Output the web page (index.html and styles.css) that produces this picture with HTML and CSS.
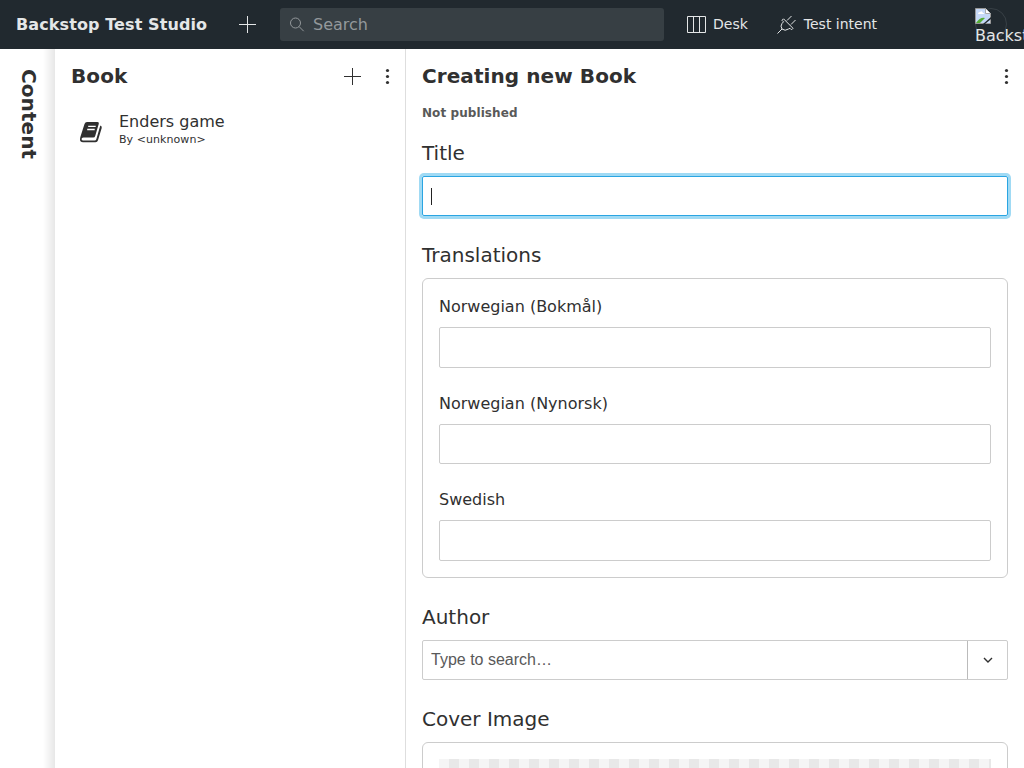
FILE: index.html
```html
<!DOCTYPE html>
<html lang="en">
<head>
<meta charset="utf-8">
<title>Backstop Test Studio</title>
<link rel="stylesheet" href="styles.css">
</head>
<body>
<header class="navbar">
  <div class="brand">Backstop Test Studio</div>
  <svg class="create" width="25" height="25" viewBox="0 0 25 25"><path d="M12.5 4v17M4 12.5h17" stroke="currentColor"/></svg>
  <div class="search">
    <svg width="25" height="25" viewBox="0 0 25 25" fill="none" stroke="currentColor"><circle cx="9.500" cy="11" r="5"/><path d="M13 14.500l4.700 4.700"/></svg>
    <span>Search</span>
  </div>
  <nav class="tools">
    <a class="tool desk"><svg width="25" height="25" viewBox="0 0 25 25" fill="none" stroke="currentColor"><path d="M3.5 4.500h18v16h-18zM9.500 4.500v16M15.500 4.500v16"/></svg><span>Desk</span></a>
    <a class="tool intent"><svg width="25" height="25" viewBox="0 0 25 25" fill="none" stroke="currentColor"><path d="M3.500 21.500L8 17M8 17q-2-3 0-5.500l1.500-1.700-1.500-1.500 1.500-1.500 9.500 9.500-1.500 1.500-1.500-1.500L14.500 17Q11 19.500 8 17zM13 8.500l4.500-4.500M17 12.500l4.500-4.500"/></svg><span>Test intent</span></a>
  </nav>
  <div class="avatar">
    <div class="avatar-ring"></div>
    <svg width="16" height="16" viewBox="0 0 16 16"><path d="M.5.500h10l5 5v10H.5z" fill="#c5d8f7" stroke="#999"/><path d="M10.500.500v5h5" fill="#fff" stroke="#aaa"/><path d="M3 6q0-2 2-2 2-2 3 1 2 0 1 1z" fill="#fff"/><path d="M1 15q4-6 9-5l-5 5z" fill="#54ad35"/><path d="M8 16l8-7v2l-6 5z" fill="#21292f"/></svg>
    <span>Backstop</span>
  </div>
</header>
<main class="desk-tool">
  <aside class="collapsed"><h2>Content</h2></aside>
  <section class="list-pane">
    <div class="pane-head">
      <h2>Book</h2>
      <svg class="plus" width="25" height="25" viewBox="0 0 25 25"><path d="M12.500 4v17M4 12.500h17" stroke="currentColor"/></svg>
      <svg class="dots" width="5" height="17" viewBox="0 0 5 17" fill="currentColor"><circle cx="2.500" cy="2.500" r="1.600"/><circle cx="2.500" cy="8.500" r="1.600"/><circle cx="2.500" cy="14.500" r="1.600"/></svg>
    </div>
    <div class="item">
      <svg width="24" height="24" viewBox="0 0 24 24"><path d="M8 2h10.500q1.800 0 1.300 1.700L16.200 16q-.4 1.500-2 1.500H4.500q-2.300 0-1.900 2 .3 1 1.600 1h11.500q1.200 0 1.600-1.300L21.300 5.500q2 .7 1.400 2.500L19 20.300Q18.400 22.300 16.500 22.300H4Q1 22.300 1 19.500 1 18 1.500 16.500L5.500 4Q6.200 2 8 2z" fill="currentColor"/><path d="M9.200 6.300h7.500M8.200 9.500h7.500" stroke="#fff" stroke-width="1.300"/></svg>
      <div class="item-text"><div class="item-title">Enders game</div><div class="item-sub">By &lt;unknown&gt;</div></div>
    </div>
  </section>
  <section class="editor">
    <div class="pane-head">
      <h2>Creating new Book</h2>
      <svg class="dots" width="5" height="17" viewBox="0 0 5 17" fill="currentColor"><circle cx="2.500" cy="2.500" r="1.600"/><circle cx="2.500" cy="8.500" r="1.600"/><circle cx="2.500" cy="14.500" r="1.600"/></svg>
    </div>
    <div class="status">Not published</div>
    <div class="field">
      <div class="label">Title</div>
      <div class="input focused"><i class="caret"></i></div>
    </div>
    <div class="field">
      <div class="label">Translations</div>
      <div class="fieldset">
        <div class="subfield first"><div class="sublabel">Norwegian (Bokmål)</div><div class="input"></div></div>
        <div class="subfield"><div class="sublabel">Norwegian (Nynorsk)</div><div class="input"></div></div>
        <div class="subfield last"><div class="sublabel">Swedish</div><div class="input"></div></div>
      </div>
    </div>
    <div class="field">
      <div class="label">Author</div>
      <div class="input select"><span>Type to search…</span><div class="toggle"><svg width="10" height="7" viewBox="0 0 10 7" fill="none" stroke="currentColor" stroke-width="1.400"><path d="M1 1l4 4 4-4"/></svg></div></div>
    </div>
    <div class="field">
      <div class="label">Cover Image</div>
      <div class="fieldset cover"><div class="checker"></div></div>
    </div>
  </section>
</main>
</body>
</html>
```
FILE: styles.css
```css
* { box-sizing: border-box; }
body { margin: 0; height: 768px; overflow: hidden; background: #fff; color: #303030; font: 16px/20px "DejaVu Sans", sans-serif; }
h2 { margin: 0; font-size: 20px; line-height: 24px; font-weight: bold; letter-spacing: 0.08px; }
svg { display: block; flex: none; }

.navbar { display: flex; align-items: center; height: 49px; background: #21292f; color: #e4e6e7; overflow: hidden; }
.brand { width: 219px; padding-left: 16px; font-weight: bold; letter-spacing: 0.1px; white-space: nowrap; }
.create { margin-left: 16px; }
.search { display: flex; align-items: center; width: 384px; height: 33px; margin-left: 20px; padding-left: 6px; border-radius: 3px; background: #373f44; color: #93989b; }
.search span { margin-left: 2px; }
.tools { display: flex; font-size: 14px; margin-left: 20px; }
.tool { display: flex; align-items: center; }
.tool span { margin: 0 0 2px 4px; }
.intent { margin-left: 26px; }
.intent span { margin-left: 5px; }
.avatar { position: relative; width: 49px; height: 33px; margin-left: auto; }
.avatar-ring { position: absolute; top: 0; left: 0; width: 32px; height: 32px; border: 1px solid #384046; border-radius: 50%; }
.avatar svg { position: relative; }
.avatar span { position: relative; display: block; line-height: 20px; margin-top: 2px; }

.desk-tool { display: flex; height: 719px; }
.collapsed { width: 55px; flex: none; padding: 20px 0 0 17px; background: linear-gradient(to right, #fff 43px, #e7e7e7 55px); }
.collapsed h2 { writing-mode: vertical-rl; width: 24px; line-height: 24px; }
.list-pane { width: 351px; flex: none; border-right: 1px solid #dedede; }
.pane-head { display: flex; align-items: center; height: 54px; padding-left: 16px; }
.pane-head h2 { flex: 1; }
.plus { margin-right: 20px; }
.list-pane .dots { margin-right: 15px; }
.item { display: flex; margin-top: 8px; padding-left: 24px; }
.item > svg { margin-top: 9px; }
.item-text { margin: 1px 0 0 16px; }
.item-title { line-height: 20px; }
.item-sub { font-size: 11px; line-height: 16px; letter-spacing: 0.06px; }

.editor { flex: 1; height: 719px; padding: 0 16px; overflow: hidden; }
.editor .pane-head { padding-left: 0; }
.editor .dots { margin-right: -1px; }
.status { height: 20px; margin-bottom: 18px; font-size: 12px; line-height: 20px; font-weight: bold; letter-spacing: 0.08px; color: #595959; }
.field { margin-bottom: 27px; }
.label { height: 24px; margin-bottom: 11px; font-size: 20px; line-height: 24px; }
.input { height: 41px; border: 1px solid #ccc; border-radius: 2px; }
.focused { height: 40px; border-color: #2aa5e2; box-shadow: 0 0 0 3px #a0daf4; padding: 11px 8px; }
.caret { display: block; width: 1px; height: 17px; background: #222; }
.fieldset { height: 300px; padding: 18px 16px 0; border: 1px solid #ccc; border-radius: 6px; }
.sublabel { height: 20px; margin-bottom: 10px; }
.subfield { height: 97px; }
.subfield .input { height: 40px; }
.first .input, .last .input { height: 41px; }
.first + .subfield { height: 96px; }
.select { display: flex; height: 40px; padding-left: 8px; font-family: "Liberation Sans", Arial, sans-serif; color: #595959; line-height: 38px; }
.select span { flex: 1; }
.toggle { display: flex; align-items: center; justify-content: center; width: 40px; border-left: 1px solid #bbb; color: #303030; }
.cover { padding-top: 16px; }
.checker { height: 200px; background: repeating-conic-gradient(#e8e8e8 0 25%, #f5f5f5 0 50%) 0 0 / 20px 20px; }
```
